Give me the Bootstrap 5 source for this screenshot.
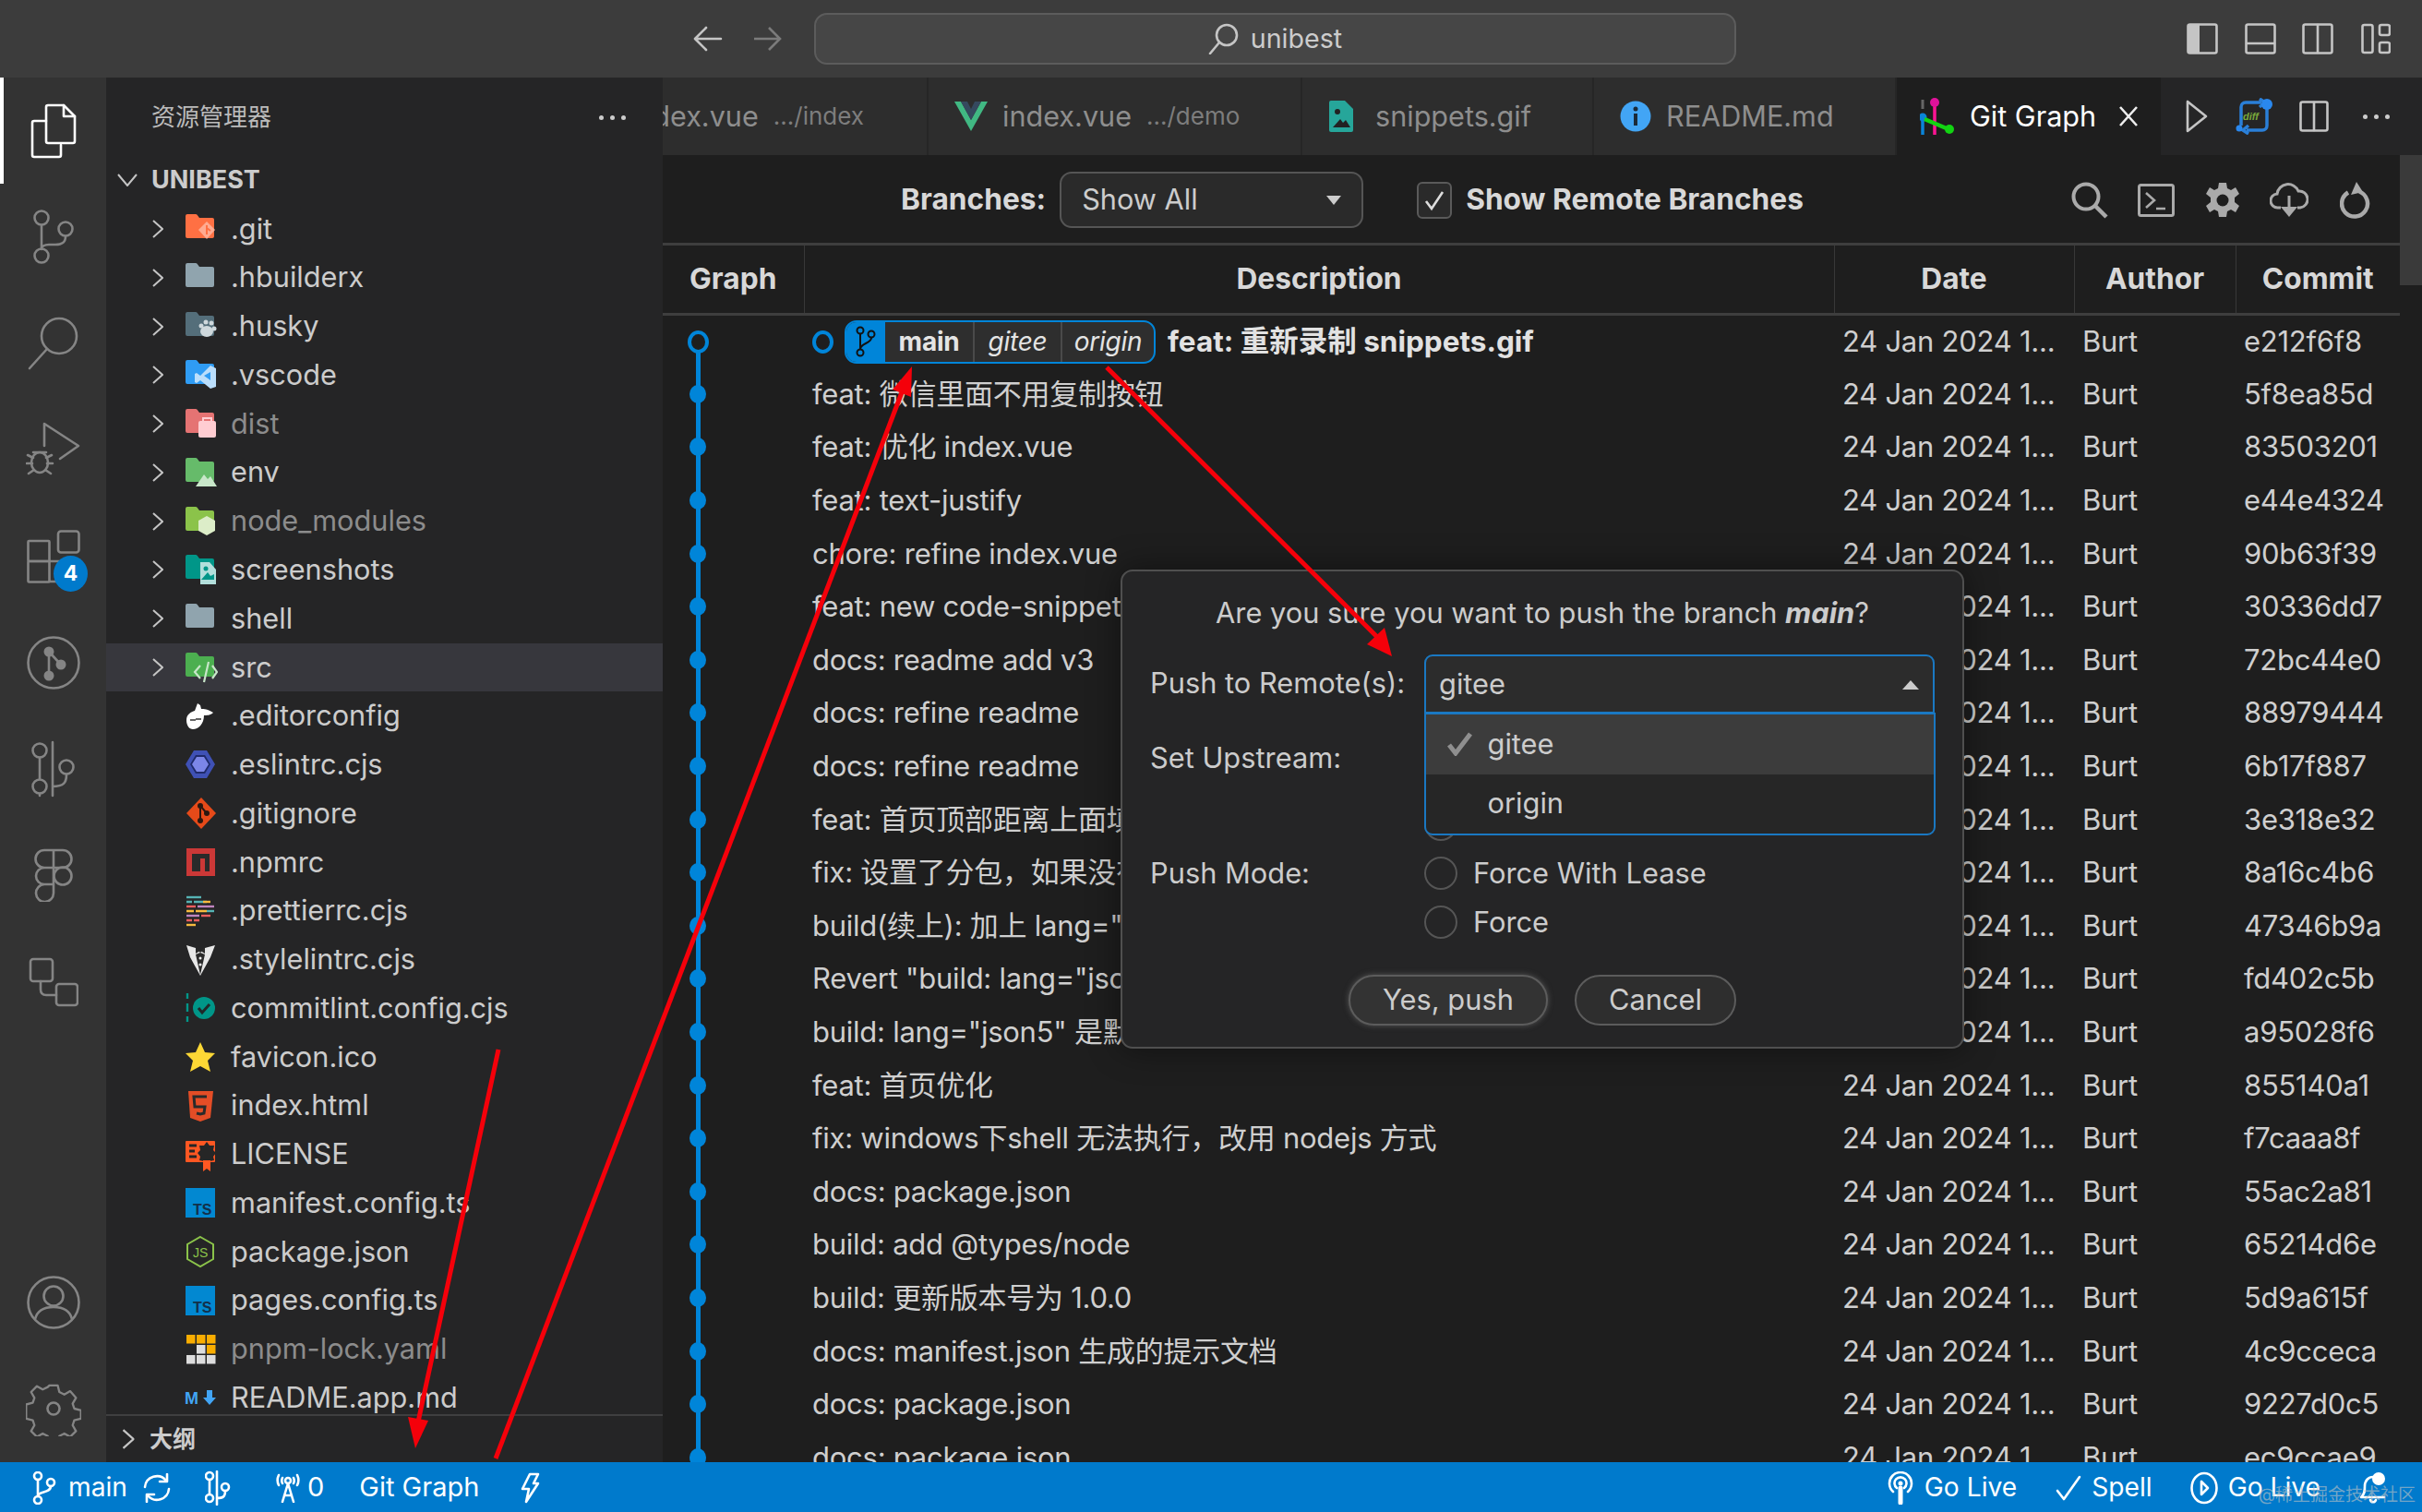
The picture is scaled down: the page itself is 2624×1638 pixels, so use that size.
<!DOCTYPE html>
<html lang="zh-CN">
<head>
<meta charset="utf-8">
<title>Git Graph - unibest</title>
<link href="https://cdn.jsdelivr.net/npm/bootstrap@5.3.0/dist/css/bootstrap.min.css" rel="stylesheet">
<style>
html,body{width:2624px;height:1638px;overflow:hidden;margin:0}
body{position:relative;background:#1e1e1e;color:#ccc;font-family:"Inter","Noto Sans CJK SC",sans-serif;font-size:30.7px;line-height:1.2}
svg{display:block;flex:none}
.ic-line{fill:none;stroke:#858585;stroke-width:2.6;stroke-linecap:round;stroke-linejoin:round}
.wline{fill:none;stroke:#fff;stroke-width:2.6;stroke-linecap:round;stroke-linejoin:round}
.gline{fill:none;stroke:#c5c5c5;stroke-width:2.6;stroke-linecap:round;stroke-linejoin:round}
.titlebar{height:84px;background:#3c3c3c;flex:none;padding-left:740px;padding-right:19px}
.navbtn{width:54px;height:56px}
.navbtn+.navbtn{margin-left:10px;margin-right:24px}
.searchbox{width:999px;height:56px;background:#464646;border:2px solid #5c5c5c;border-radius:14px;color:#ccc;font-size:28.6px;gap:13px}
.layoutbtn{width:62.6px}
.workbench{height:1500px;min-height:0}
.actbar{width:115px;background:#333;flex:none}
.actitem{height:115.25px;flex:none;position:relative}
.actitem.on{border-left:4px solid #fff}
.actbadge{position:absolute;left:58px;top:57px;width:37px;height:39px;border-radius:50%;background:#007acc;color:#fff;font-size:23px;font-weight:700}
.sidepane{width:603px;background:#252526;flex:none;min-height:0}
.sidehead{height:86px;flex:none;padding:0 40px 0 49px;font-size:26px;color:#bbb}
.dots3{gap:7px}
.dots3 i{width:5px;height:5px;background:#ccc;border-radius:50%;display:block}
.rootrow{height:50px;flex:none;font-weight:700;font-size:27px;color:#ccc;padding-left:12px;gap:15px}
.treebox{flex:1 1 auto;min-height:0;overflow:hidden;padding-top:1.7px}
.trow{height:52.78px;padding-left:50px;white-space:nowrap}
.trow.sel{background:#37373d}
.trow.leaf{padding-left:85px}
.trow .fico{width:36px;height:36px;margin-right:14px}
.trow .chev{margin-right:23px;width:12px}
.muted1{color:#8c8c8c}
.outline{height:52px;flex:none;border-top:2px solid #3f3f40;padding-left:17px;font-size:25px;font-weight:700;gap:16px}
.editor{flex:1 1 auto;min-width:0;min-height:0;background:#1e1e1e}
.tabstrip{height:84px;background:#252526;flex:none;overflow:hidden}
.vtab{flex:none;height:84px;background:#2d2d2d;color:#8e8e8e;font-size:30.6px;white-space:nowrap;overflow:hidden;border-right:2px solid #262626}
.vtab small{font-size:26px;color:#7d7d7d;margin-left:16px}
.vtab.cur{background:#1e1e1e;color:#fff;border:0}
.tabacts{flex:1 1 auto}
.gmain{flex:1 1 auto;min-height:0}
.gcontent{width:1882px;flex:none;min-height:0;overflow:hidden}
.gscroll{width:24px;flex:none}
.gthumb{height:141px;background:#3a3a3a}
.gtool{height:98px;flex:none;border-bottom:3px solid #3e3e3e;padding-left:258px;padding-right:12px;padding-top:2px;font-weight:700;font-size:31.7px;color:#d8d8d8}
.fakeselect{width:329px;height:61px;margin-left:15px;border:2px solid #555;border-radius:13px;background:#2a2a2a;padding:0 22px;font-weight:400;color:#ccc;font-size:30.7px}
.caretdn{width:0;height:0;border-left:8px solid transparent;border-right:8px solid transparent;border-top:10px solid #ccc}
.caretup{width:0;height:0;border-left:9px solid transparent;border-right:9px solid transparent;border-bottom:10px solid #ccc}
.fakecheck{width:38px;height:40px;border:2px solid #5a5a5a;border-radius:6px;background:#2a2a2a;margin-left:58px;margin-right:15px}
.toolico{width:72px}
.ggt.table{--bs-table-bg:transparent;--bs-table-color:#cfcfcf;--bs-table-border-color:#3e3e3e;margin:0;table-layout:fixed;width:1882px;border-collapse:collapse;font-size:31px;letter-spacing:-.25px}
.ggt.table>thead>tr>th{height:74.5px;padding:0 9px;border-bottom:3px solid #3e3e3e;border-right:1px solid #383838;text-align:center;vertical-align:middle;font-weight:700;font-size:31.7px;letter-spacing:0;color:#d8d8d8;box-shadow:none}
.ggt.table>thead>tr>th:last-child{border-right:0}
.ggt.table>tbody>tr>td{height:57.6px;padding:0 0 0 9px;border:0;vertical-align:middle;white-space:nowrap;overflow:hidden;box-shadow:none;line-height:1.1}
.ggt.table>tbody>tr>td.gcol{padding:0;background-image:linear-gradient(#0085d9,#0085d9);background-repeat:no-repeat;background-position:35.5px 0;background-size:5px 100%}
.ggt.table>tbody>tr>td.gcol.gfirst{background-position:35.5px 100%;background-size:5px 50%}
.gdot{display:block;width:18px;height:20px;margin-left:29px;border-radius:50%;background:#0085d9}
.gring{display:block;width:23px;height:25px;border:4px solid #0085d9;border-radius:50%;background:#1e1e1e;flex:none}
.gcol .gring{margin-left:26.5px}
.refpill{height:47px;margin:0 13px 0 12px;border:2px solid #0085d9;border-radius:13px;overflow:hidden;background:#2e2e2e;font-size:28px;color:#e4e4e4}
.refpill>span{height:100%;padding:0;justify-content:center}
.refbr{width:42px;background:#0085d9}
.refseg{border-left:2px solid #4a4a4a}
.commit-strong{font-weight:700;color:#e2e2e2;font-size:31.5px;letter-spacing:0}
.statusbar{height:54px;background:#007acc;color:#fff;flex:none;font-size:28.2px;padding-top:1px;white-space:nowrap}
.stitem{flex:none}
.stwide{font-size:29px}
.pushdlg{position:absolute;left:1214px;top:617px;width:914px;height:519px;background:#252526;border:2px solid #4f4f4f;border-radius:13px;box-shadow:0 0 36px rgba(0,0,0,.45);z-index:5;font-size:30.8px;color:#ccc}
.dlgtitle{height:90px}
.dlgrow{padding-left:30px}
.dlglabel{width:297px;flex:none}
.remotesel{width:553px;height:63.5px;border:2.5px solid #1a78c2;border-radius:9px 9px 0 0;background:#2c2c2c;padding:2px 15px 0 14px;position:relative}
.remotelist{position:absolute;left:-2.5px;right:-2.5px;top:61px;height:133px;background:#262626;border:2.5px solid #1a78c2;border-radius:0 0 9px 9px;overflow:hidden;z-index:2}
.remoteopt{height:64.5px;padding-left:67px;position:relative}
.remoteopt.hl{background:#3c3c3c}
.remoteopt svg{position:absolute;left:22px;top:19px}
.dlgradio{width:36px;height:36px;border-radius:50%;border:2px solid #555;margin-right:17px;flex:none}
.dlgbtns{margin-top:30px;gap:29px}
.vsbtn{height:55px;border:2px solid #5c5c5c;border-radius:28px;background:#2e2e2e;color:#ccc;font-size:30.8px;line-height:1;padding:0 35px;display:flex;align-items:center}
.vsbtn.pri{box-shadow:0 0 6px #555;background:#333}
.vsbtn:hover{background:#333;color:#ccc;border-color:#5c5c5c}
.marks{position:absolute;left:0;top:0;width:2624px;height:1638px;z-index:9;pointer-events:none}
.wmark{position:absolute;right:7px;bottom:6px;font-size:19px;color:rgba(195,195,195,.6);z-index:8}
</style>
</head>
<body class="d-flex flex-column">
<svg width="0" height="0" style="position:absolute">
<defs>
<symbol id="folder" viewBox="0 0 36 36"><path d="M3 2h9a2 2 0 0 1 1.600.800L16 6h14a2 2 0 0 1 2 2v18a2 2 0 0 1-2 2H3a2 2 0 0 1-2-2V4a2 2 0 0 1 2-2z"/></symbol>
<symbol id="chev" viewBox="0 0 12 20"><polyline points="1,1 11,10 1,19" fill="none" stroke="#c5c5c5" stroke-width="2"/></symbol>
</defs>
</svg>

<!-- title bar -->
<header class="titlebar d-flex align-items-center">
<span class="navbtn d-flex align-items-center justify-content-center"><svg width="32" height="28" viewBox="0 0 32 28"><path class="gline" d="M30 14H3M14 2 2 14l12 12"/></svg></span>
<span class="navbtn d-flex align-items-center justify-content-center"><svg width="32" height="28" viewBox="0 0 32 28"><path d="M2 14h27M18 2l12 12-12 12" fill="none" stroke="#7b7b7b" stroke-width="2.600"/></svg></span>
<div class="searchbox d-flex align-items-center justify-content-center"><svg width="33" height="34" viewBox="0 0 33 34"><circle cx="20" cy="13" r="11" class="gline" stroke-width="2"/><path class="gline" d="M12 21 2 33"/></svg><span>unibest</span></div>
<div class="ms-auto d-flex align-items-center">
<span class="layoutbtn d-flex justify-content-center"><svg width="34" height="34" viewBox="0 0 34 34"><rect x="1.500" y="1.500" width="31" height="31" rx="2" class="gline"/><path d="M1 3a2 2 0 0 1 2-2h11v32H3a2 2 0 0 1-2-2z" fill="#c5c5c5"/></svg></span>
<span class="layoutbtn d-flex justify-content-center"><svg width="34" height="34" viewBox="0 0 34 34"><rect x="1.500" y="1.500" width="31" height="31" rx="2" class="gline"/><path class="gline" d="M2 22h30"/></svg></span>
<span class="layoutbtn d-flex justify-content-center"><svg width="34" height="34" viewBox="0 0 34 34"><rect x="1.500" y="1.500" width="31" height="31" rx="2" class="gline"/><path class="gline" d="M17 2v30"/></svg></span>
<span class="layoutbtn d-flex justify-content-center"><svg width="32" height="34" viewBox="0 0 32 34"><rect x="1.500" y="2" width="11" height="30" rx="2" class="gline"/><rect x="20" y="2" width="11" height="11" rx="2" class="gline"/><rect x="20" y="21" width="11" height="11" rx="2" class="gline"/></svg></span>
</div>
</header>

<div class="workbench d-flex flex-grow-1">
<!-- activity bar -->
<nav class="actbar d-flex flex-column">
<div class="actitem on d-flex align-items-center justify-content-center pe-1"><svg width="52" height="60" viewBox="0 0 52 60"><path class="wline" d="M34 45v11a2 2 0 0 1-2 2H5a2 2 0 0 1-2-2V21a2 2 0 0 1 2-2h13"/><path class="wline" d="M18 4a2 2 0 0 1 2-2h17l12 12v27a2 2 0 0 1-2 2H20a2 2 0 0 1-2-2z"/><path class="wline" d="M37 2v12h12"/></svg></div>
<div class="actitem d-flex align-items-center justify-content-center"><svg width="46" height="60" viewBox="0 0 46 60"><circle cx="10" cy="9" r="7.500" class="ic-line"/><circle cx="36" cy="21" r="7.500" class="ic-line"/><circle cx="10" cy="50" r="7.500" class="ic-line"/><path class="ic-line" d="M10 17v25M36 29c0 7-4 9-11 9H18c-5 0-8 2-8 5"/></svg></div>
<div class="actitem d-flex align-items-center justify-content-center"><svg width="56" height="58" viewBox="0 0 56 58"><circle cx="34" cy="21" r="19" class="ic-line"/><path class="ic-line" stroke-width="3" d="M21 35 2 56"/></svg></div>
<div class="actitem d-flex align-items-center justify-content-center"><svg width="60" height="60" viewBox="0 0 60 60"><path class="ic-line" d="M20 26V2l37 24-20 14"/><ellipse cx="15" cy="44" rx="9" ry="11" class="ic-line"/><path class="ic-line" d="M8 33l14 0M2 36l6 3M28 36l-6 3M1 45h6M23 45h6M3 56l6-4M27 56l-6-4"/></svg></div>
<div class="actitem d-flex align-items-center justify-content-center"><svg width="58" height="58" viewBox="0 0 58 58"><rect x="34" y="1.500" width="22.500" height="23" rx="3" class="ic-line"/><rect x="1.500" y="12" width="23" height="22" rx="1" class="ic-line"/><rect x="1.500" y="34" width="23" height="22.500" rx="1" class="ic-line"/><path class="ic-line" d="M24.500 34H47v22H24.500"/></svg><span class="actbadge d-flex align-items-center justify-content-center">4</span></div>
<div class="actitem d-flex align-items-center justify-content-center"><svg width="58" height="58" viewBox="0 0 58 58"><circle cx="29" cy="29" r="27.500" class="ic-line"/><circle cx="24" cy="17" r="5.500" fill="#858585"/><circle cx="37" cy="31" r="5.500" fill="#858585"/><circle cx="24" cy="43" r="5.500" fill="#858585"/><path class="ic-line" d="M24 18v25M25 18l11 12"/></svg></div>
<div class="actitem d-flex align-items-center justify-content-center"><svg width="48" height="62" viewBox="0 0 48 62"><circle cx="9" cy="11" r="7.500" class="ic-line"/><circle cx="38" cy="29" r="7.500" class="ic-line"/><circle cx="9" cy="50" r="7.500" class="ic-line"/><path class="ic-line" d="M9 19v23M23 2v58M38 37c0 9-3 13-15 13M9 58v2"/></svg></div>
<div class="actitem d-flex align-items-center justify-content-center"><svg width="42" height="58" viewBox="0 0 42 58"><path class="ic-line" d="M21 2H11a9.500 9.500 0 0 0 0 19h10zM21 2h10a9.500 9.500 0 0 1 0 19H21zM21 21H11a9 9 0 0 0 0 18h10zM21 39H11a9.500 9.500 0 1 0 10 9.500z"/><circle cx="31" cy="30" r="9.500" class="ic-line"/></svg></div>
<div class="actitem d-flex align-items-center justify-content-center"><svg width="54" height="54" viewBox="0 0 54 54"><rect x="2" y="2" width="24" height="24" rx="3" class="ic-line"/><rect x="30" y="29" width="23" height="23" rx="3" class="ic-line"/><path class="ic-line" d="M13 26v9c0 4 2 6 6 6h11"/></svg></div>
<div class="mt-auto">
<div class="actitem d-flex align-items-center justify-content-center"><svg width="58" height="60" viewBox="0 0 58 60"><circle cx="29" cy="30" r="27.500" class="ic-line" stroke-width="3"/><circle cx="29" cy="23" r="10.500" class="ic-line"/><path class="ic-line" d="M9 48c2-8 9-13 20-13s18 5 20 13"/></svg></div>
<div class="actitem d-flex align-items-center justify-content-center"><svg width="60" height="60" viewBox="0 0 60 60"><path class="ic-line" stroke-width="3" d="M25 2h10l2 8 6 3 7-4 7 8-4 7 2 6 8 2v10l-8 2-2 6 4 7-7 7-7-4-6 3-2 8H25l-2-8-6-3-7 4-7-7 4-7-2-6-8-2V25l8-2 2-6-4-7 7-7 7 4 6-3z" transform="translate(3 3) scale(.9)"/><circle cx="30" cy="30" r="6.500" class="ic-line"/></svg></div>
</div>
</nav>

<!-- explorer -->
<aside class="sidepane d-flex flex-column">
<div class="sidehead d-flex align-items-center justify-content-between"><span>资源管理器</span><span class="dots3 d-flex"><i></i><i></i><i></i></span></div>
<div class="rootrow d-flex align-items-center"><svg width="22" height="14" viewBox="0 0 22 14"><polyline points="1,1 11,13 21,1" fill="none" stroke="#c5c5c5" stroke-width="2"/></svg><span>UNIBEST</span></div>
<div class="treebox">
<div class="trow d-flex align-items-center"><svg class="chev" height="20"><use href="#chev"/></svg><svg class="fico" viewBox="0 0 36 36"><use href="#folder" fill="#ff7043"/><path d="M24 10l9 9-9 10-9-10z" fill="#ffab91"/><path d="M24 14v10M24 17l4 3" stroke="#ff7043" stroke-width="2" fill="none"/></svg><span>.git</span></div>
<div class="trow d-flex align-items-center"><svg class="chev" height="20"><use href="#chev"/></svg><svg class="fico" viewBox="0 0 36 36"><use href="#folder" fill="#90a4ae"/></svg><span>.hbuilderx</span></div>
<div class="trow d-flex align-items-center"><svg class="chev" height="20"><use href="#chev"/></svg><svg class="fico" viewBox="0 0 36 36"><use href="#folder" fill="#546e7a"/><g fill="#cfd8dc"><ellipse cx="24" cy="23" rx="7" ry="6"/><circle cx="18" cy="17" r="2.500"/><circle cx="23" cy="13" r="2.500"/><circle cx="29" cy="14" r="2.500"/><circle cx="32" cy="20" r="2.500"/></g></svg><span>.husky</span></div>
<div class="trow d-flex align-items-center"><svg class="chev" height="20"><use href="#chev"/></svg><svg class="fico" viewBox="0 0 36 36"><use href="#folder" fill="#2f9cf4"/><path d="M28 8l6 3v20l-6 2-11-9-4 3-2-1v-9l2-1 4 3zM28 15l-7 4 7 5z" fill="#bbdefb"/></svg><span>.vscode</span></div>
<div class="trow d-flex align-items-center"><svg class="chev" height="20"><use href="#chev"/></svg><svg class="fico" viewBox="0 0 36 36"><use href="#folder" fill="#e57373"/><rect x="15" y="15" width="19" height="18" rx="2" fill="#ffcdd2"/><path d="M20 15v-3h9v3" stroke="#ffcdd2" stroke-width="2" fill="none"/></svg><span class="muted1">dist</span></div>
<div class="trow d-flex align-items-center"><svg class="chev" height="20"><use href="#chev"/></svg><svg class="fico" viewBox="0 0 36 36"><use href="#folder" fill="#66bb6a"/><path d="M12 33l9-13 4 5 3-3 7 11z" fill="#c8e6c9"/></svg><span>env</span></div>
<div class="trow d-flex align-items-center"><svg class="chev" height="20"><use href="#chev"/></svg><svg class="fico" viewBox="0 0 36 36"><use href="#folder" fill="#8bc34a"/><path d="M24 12l9 5v11l-9 5-9-5V17z" fill="#dcedc8"/></svg><span class="muted1">node_modules</span></div>
<div class="trow d-flex align-items-center"><svg class="chev" height="20"><use href="#chev"/></svg><svg class="fico" viewBox="0 0 36 36"><use href="#folder" fill="#009688"/><path d="M17 10h10l7 8v16H17z" fill="#b2dfdb"/><circle cx="23" cy="17" r="2.500" fill="#009688"/><path d="M18 29l7-8 3 4 4-2v6z" fill="#009688"/></svg><span>screenshots</span></div>
<div class="trow d-flex align-items-center"><svg class="chev" height="20"><use href="#chev"/></svg><svg class="fico" viewBox="0 0 36 36"><use href="#folder" fill="#90a4ae"/></svg><span>shell</span></div>
<div class="trow sel d-flex align-items-center"><svg class="chev" height="20"><use href="#chev"/></svg><svg class="fico" viewBox="0 0 36 36"><use href="#folder" fill="#4caf50"/><path d="M17 16l-6 7 6 7M30 16l5 7-5 7M26 12l-5 22" fill="none" stroke="#c8e6c9" stroke-width="2.200"/></svg><span>src</span></div>

<div class="trow leaf d-flex align-items-center"><svg class="fico" viewBox="0 0 36 36"><path d="M2 22c0-6 5-9 9-10l3-8 3 2 1 4c3 0 7 0 13 4-3 3-7 3-10 3 0 9-6 15-12 15-4 0-7-4-7-10z" fill="#fff"/><path d="M6 22h6M12 21h6" stroke="#333" stroke-width="1.500"/></svg><span>.editorconfig</span></div>
<div class="trow leaf d-flex align-items-center"><svg class="fico" viewBox="0 0 36 36"><path d="M10 3h14l9 15-9 15H10L1 18z" fill="#3f51b5"/><path d="M12 8h10l6 10-6 10H12L6 18z" fill="#1f2a6b"/><path d="M13 10h8l5 8-5 8h-8l-5-8z" fill="#7c86e8"/></svg><span>.eslintrc.cjs</span></div>
<div class="trow leaf d-flex align-items-center"><svg class="fico" viewBox="0 0 36 36"><path d="M18 1l16 17-16 17L2 18z" fill="#e64a19"/><circle cx="17" cy="10" r="3" fill="#2b1810"/><circle cx="24" cy="18" r="3" fill="#2b1810"/><circle cx="17" cy="26" r="3" fill="#2b1810"/><path d="M17 10v16M17 10l7 8" stroke="#2b1810" stroke-width="2"/></svg><span>.gitignore</span></div>
<div class="trow leaf d-flex align-items-center"><svg class="fico" viewBox="0 0 36 36"><rect x="2" y="3" width="31" height="30" fill="#cb3837"/><path d="M8 9h19v19h-5V14h-5v14H8z" fill="#2a2a2a"/></svg><span>.npmrc</span></div>
<div class="trow leaf d-flex align-items-center"><svg class="fico" viewBox="0 0 36 36"><g stroke-width="2.400"><path d="M2 3h16" stroke="#56b3b4"/><path d="M2 8h6M10 8h14" stroke="#56b3b4"/><path d="M20 8h8" stroke="#f7ba3e"/><path d="M2 13h10" stroke="#ea5e5e"/><path d="M14 13h18" stroke="#bf85bf"/><path d="M2 18h8M12 18h12" stroke="#f7ba3e"/><path d="M24 18h8" stroke="#56b3b4"/><path d="M2 23h14" stroke="#bf85bf"/><path d="M18 23h10" stroke="#ea5e5e"/><path d="M2 28h6M10 28h6" stroke="#ea5e5e"/><path d="M2 33h10" stroke="#f7ba3e"/></g></svg><span>.prettierrc.cjs</span></div>
<div class="trow leaf d-flex align-items-center"><svg class="fico" viewBox="0 0 36 36"><path d="M2 2l10 3 5 5 5-5 11-3-5 13-11 20L6 15z" fill="#e8e8e8"/><path d="M12 12l5 22 5-22-5-2z" fill="#2a2a2a"/><path d="M12 4l5 4 5-4v7l-5-3-5 3z" fill="#2a2a2a"/><circle cx="17" cy="16" r="1.500" fill="#eee"/><circle cx="17" cy="23" r="1.500" fill="#eee"/></svg><span>.stylelintrc.cjs</span></div>
<div class="trow leaf d-flex align-items-center"><svg class="fico" viewBox="0 0 36 36"><path d="M3 2v6M3 13v9M3 27v6" stroke="#009688" stroke-width="2.400"/><circle cx="21" cy="18" r="12" fill="#009688"/><path d="M15 18l4 5 8-9" fill="none" stroke="#1f2a2a" stroke-width="3"/></svg><span>commitlint.config.cjs</span></div>
<div class="trow leaf d-flex align-items-center"><svg class="fico" viewBox="0 0 36 36"><path d="M17 2l5 11 11 1-8 8 3 12-11-6-11 6 3-12-8-8 11-1z" fill="#fdd835"/></svg><span>favicon.ico</span></div>
<div class="trow leaf d-flex align-items-center"><svg class="fico" viewBox="0 0 36 36"><path d="M4 2h27l-3 29-11 4-11-4z" fill="#e44d26"/><path d="M24 8H10l1 11h11l-1 7-4 1-4-1" fill="none" stroke="#2a2a2a" stroke-width="3"/></svg><span>index.html</span></div>
<div class="trow leaf d-flex align-items-center"><svg class="fico" viewBox="0 0 36 36"><rect x="1" y="3" width="32" height="23" rx="1" fill="#ff5722"/><path d="M5 8h8M5 14h6M5 20h8" stroke="#262626" stroke-width="3"/><path d="M24 4l3 4 5 0-1 5 3 3-3 4 1 4-5 1-3 3-3-3-5-1 1-4-3-4 3-3-1-5 5 0z" fill="#262626"/><path d="M20 24v12l4-3 4 3V24z" fill="#ff5722"/></svg><span>LICENSE</span></div>
<div class="trow leaf d-flex align-items-center"><svg class="fico" viewBox="0 0 36 36"><rect x="1" y="2" width="32" height="32" fill="#0288d1"/><text x="9" y="31" font-family="Liberation Sans,sans-serif" font-size="16" font-weight="700" fill="#12304a">TS</text></svg><span>manifest.config.ts</span></div>
<div class="trow leaf d-flex align-items-center"><svg class="fico" viewBox="0 0 36 36"><path d="M17 2l14 8v16l-14 8-14-8V10z" fill="none" stroke="#8bc34a" stroke-width="2"/><text x="9" y="24" font-family="Liberation Sans,sans-serif" font-size="14" fill="#8bc34a">JS</text></svg><span>package.json</span></div>
<div class="trow leaf d-flex align-items-center"><svg class="fico" viewBox="0 0 36 36"><rect x="1" y="2" width="32" height="32" fill="#0288d1"/><text x="9" y="31" font-family="Liberation Sans,sans-serif" font-size="16" font-weight="700" fill="#12304a">TS</text></svg><span>pages.config.ts</span></div>
<div class="trow leaf d-flex align-items-center"><svg class="fico" viewBox="0 0 36 36"><rect x="2" y="2" width="9.500" height="9.500" fill="#f9ad00"/><rect x="13" y="2" width="9.500" height="9.500" fill="#f9ad00"/><rect x="24" y="2" width="9.500" height="9.500" fill="#f9ad00"/><rect x="13" y="13" width="9.500" height="9.500" fill="#ddd"/><rect x="24" y="13" width="9.500" height="9.500" fill="#f9ad00"/><rect x="2" y="24" width="9.500" height="9.500" fill="#ddd"/><rect x="13" y="24" width="9.500" height="9.500" fill="#ddd"/><rect x="24" y="24" width="9.500" height="9.500" fill="#ddd"/></svg><span class="muted1">pnpm-lock.yaml</span></div>
<div class="trow leaf d-flex align-items-center"><svg class="fico" viewBox="0 0 36 36"><text x="0" y="25" font-family="Liberation Sans,sans-serif" font-size="18" font-weight="700" fill="#42a5f5">M</text><path d="M24 10h6v8h4l-7 8-7-8h4z" fill="#42a5f5"/></svg><span>README.app.md</span></div>
</div>
<div class="outline d-flex align-items-center"><svg width="14" height="22" viewBox="0 0 12 20"><use href="#chev"/></svg><span>大纲</span></div>
</aside>

<!-- editor -->
<main class="editor d-flex flex-column">
<div class="tabstrip d-flex position-relative">
<div class="vtab d-flex align-items-center justify-content-end" style="width:288px;padding-right:68px"><span>index.vue</span><small>.../index</small></div>
<div class="vtab d-flex align-items-center" style="width:405px;padding-left:28px"><svg width="36" height="34" viewBox="0 0 36 34" class="me-3"><path d="M0 1h7l11 20L29 1h7L18 33z" fill="#41b883"/><path d="M7 1h7l4 8 4-8h7L18 21z" fill="#35495e"/></svg><span>index.vue</span><small>.../demo</small></div>
<div class="vtab d-flex align-items-center" style="width:316px;padding-left:29px"><svg width="26" height="34" viewBox="0 0 26 34" class="me-4"><path d="M2 0h15l9 9v23a2 2 0 0 1-2 2H2a2 2 0 0 1-2-2V2a2 2 0 0 1 2-2z" fill="#26a69a"/><circle cx="9" cy="12" r="3" fill="#222"/><path d="M4 29l8-9 3 4 3-3 5 8z" fill="#222"/></svg><span>snippets.gif</span></div>
<div class="vtab d-flex align-items-center" style="width:328px;padding-left:28px"><svg width="34" height="34" viewBox="0 0 34 34" class="me-3"><circle cx="17" cy="17" r="16.500" fill="#42a5f5"/><rect x="15" y="14" width="4" height="13" fill="#1b2b3a"/><circle cx="17" cy="9" r="2.500" fill="#1b2b3a"/></svg><span>README.md</span></div>
<div class="vtab cur d-flex align-items-center" style="width:286px;padding-left:25px"><svg width="38" height="40" viewBox="0 0 38 40" class="me-3"><path d="M3 2v10M3 18v8" stroke="#666" stroke-width="3"/><path d="M3 24v16" stroke="#0a84d8" stroke-width="3.500"/><circle cx="3" cy="21" r="4.500" fill="#0a84d8"/><path d="M16 8v32" stroke="#ff1493" stroke-width="3.500"/><circle cx="16" cy="5" r="5" fill="#e0129a"/><path d="M5 23l26 11" stroke="#12d412" stroke-width="4.500"/><circle cx="32" cy="34" r="5" fill="#12d412"/></svg><span>Git Graph</span><svg width="22" height="24" viewBox="0 0 22 24" class="ms-auto me-4"><path d="M2 2l18 20M20 2 2 22" stroke="#eee" stroke-width="2.600"/></svg></div>
<div class="tabacts d-flex align-items-center">
<span class="d-flex justify-content-center" style="width:78px"><svg width="24" height="36" viewBox="0 0 24 36"><path class="gline" d="M2 2v32l20-16z"/></svg></span>
<span class="d-flex justify-content-center" style="width:46px"><svg width="40" height="40" viewBox="0 0 40 40"><path d="M6 30V10c0-3 2-5 5-5h17M26 1l6 4-6 5" fill="none" stroke="#2a7fd8" stroke-width="3.500"/><path d="M34 10v20c0 3-2 5-5 5H12M14 39l-6-4 6-5" fill="none" stroke="#2a7fd8" stroke-width="3.500"/><circle cx="34" cy="7" r="6" fill="#2a88ee"/><circle cx="4" cy="33" r="3.500" fill="#2a88ee"/><text x="8" y="24" font-family="Liberation Sans,sans-serif" font-size="11" font-style="italic" font-weight="700" fill="#79a83b">diff</text></svg></span>
<span class="d-flex justify-content-center" style="width:84px"><svg width="32" height="34" viewBox="0 0 32 34"><rect x="1.500" y="1.500" width="29" height="31" rx="2" class="gline"/><path class="gline" d="M16 2v30"/></svg></span>
<span class="dots3 d-flex" style="margin-left:11px"><i></i><i></i><i></i></span>
</div>
</div>

<div class="gmain d-flex">
<div class="gcontent d-flex flex-column">
<div class="gtool d-flex align-items-center">
<span>Branches:</span>
<div class="fakeselect d-flex align-items-center justify-content-between"><span>Show All</span><span class="caretdn"></span></div>
<span class="fakecheck d-flex align-items-center justify-content-center"><svg width="24" height="24" viewBox="0 0 24 24"><path d="M3 13l6 8L21 3" fill="none" stroke="#ddd" stroke-width="2.600"/></svg></span>
<span>Show Remote Branches</span>
<div class="ms-auto d-flex align-items-center">
<span class="toolico d-flex justify-content-center"><svg width="40" height="40" viewBox="0 0 40 40"><circle cx="16" cy="16" r="13.500" fill="none" stroke="#aaa" stroke-width="4"/><path d="M26 26l12 12" stroke="#aaa" stroke-width="4.500"/></svg></span>
<span class="toolico d-flex justify-content-center"><svg width="40" height="36" viewBox="0 0 40 36"><rect x="1.500" y="1.500" width="37" height="33" rx="2" fill="none" stroke="#aaa" stroke-width="3"/><path d="M9 10l9 8-9 8M20 27h10" fill="none" stroke="#aaa" stroke-width="2.600"/></svg></span>
<span class="toolico d-flex justify-content-center"><svg width="36" height="38" viewBox="0 0 36 38"><path d="M14 0h8l1 6 4 2 5-3 4 7-5 4v5l5 4-4 7-5-3-4 2-1 6h-8l-1-6-4-2-5 3-4-7 5-4v-5l-5-4 4-7 5 3 4-2z" fill="#aaa"/><circle cx="18" cy="19" r="6.500" fill="#1e1e1e"/></svg></span>
<span class="toolico d-flex justify-content-center"><svg width="42" height="38" viewBox="0 0 42 38"><path d="M12 27H9a7.500 7.500 0 0 1-1-15 12 12 0 0 1 23-3 9 9 0 0 1 2 18h-3" fill="none" stroke="#aaa" stroke-width="3"/><path d="M21 14v16" stroke="#aaa" stroke-width="3"/><path d="M12 26h18l-9 11z" fill="#aaa"/></svg></span>
<span class="toolico d-flex justify-content-center"><svg width="34" height="40" viewBox="0 0 34 40"><path d="M21 10.500A14 14 0 1 1 9 11.500" fill="none" stroke="#aaa" stroke-width="4.500"/><path d="M18 0l7 11-13 3z" fill="#aaa"/></svg></span>
</div>
</div>
<table class="table ggt">
<colgroup><col style="width:153px"><col style="width:1116px"><col style="width:260px"><col style="width:175px"><col style="width:178px"></colgroup>
<thead><tr><th>Graph</th><th>Description</th><th>Date</th><th>Author</th><th>Commit</th></tr></thead>
<tbody>
<tr><td class="gcol gfirst"><span class="gring"></span></td><td><div class="d-flex align-items-center"><span class="gring"></span><span class="refpill d-inline-flex align-items-center"><span class="refbr d-flex align-items-center"><svg width="22" height="34" viewBox="0 0 22 34"><circle cx="5" cy="5" r="3.500" fill="none" stroke="#111" stroke-width="2"/><circle cx="17" cy="9" r="3.500" fill="none" stroke="#111" stroke-width="2"/><circle cx="5" cy="29" r="3.500" fill="none" stroke="#111" stroke-width="2"/><path d="M5 9v16M17 13c0 6-12 6-12 12" fill="none" stroke="#111" stroke-width="2"/></svg></span><span class="d-flex align-items-center fw-bold" style="width:95px">main</span><span class="refseg fst-italic d-flex align-items-center" style="width:95px">gitee</span><span class="refseg fst-italic d-flex align-items-center" style="width:101px">origin</span></span><span class="commit-strong">feat: 重新录制 snippets.gif</span></div></td><td>24 Jan 2024 1...</td><td>Burt</td><td>e212f6f8</td></tr>
<tr><td class="gcol"><span class="gdot"></span></td><td>feat: 微信里面不用复制按钮</td><td>24 Jan 2024 1...</td><td>Burt</td><td>5f8ea85d</td></tr>
<tr><td class="gcol"><span class="gdot"></span></td><td>feat: 优化 index.vue</td><td>24 Jan 2024 1...</td><td>Burt</td><td>83503201</td></tr>
<tr><td class="gcol"><span class="gdot"></span></td><td>feat: text-justify</td><td>24 Jan 2024 1...</td><td>Burt</td><td>e44e4324</td></tr>
<tr><td class="gcol"><span class="gdot"></span></td><td>chore: refine index.vue</td><td>24 Jan 2024 1...</td><td>Burt</td><td>90b63f39</td></tr>
<tr><td class="gcol"><span class="gdot"></span></td><td>feat: new code-snippet</td><td>24 Jan 2024 1...</td><td>Burt</td><td>30336dd7</td></tr>
<tr><td class="gcol"><span class="gdot"></span></td><td>docs: readme add v3</td><td>24 Jan 2024 1...</td><td>Burt</td><td>72bc44e0</td></tr>
<tr><td class="gcol"><span class="gdot"></span></td><td>docs: refine readme</td><td>24 Jan 2024 1...</td><td>Burt</td><td>88979444</td></tr>
<tr><td class="gcol"><span class="gdot"></span></td><td>docs: refine readme</td><td>24 Jan 2024 1...</td><td>Burt</td><td>6b17f887</td></tr>
<tr><td class="gcol"><span class="gdot"></span></td><td>feat: 首页顶部距离上面填</td><td>24 Jan 2024 1...</td><td>Burt</td><td>3e318e32</td></tr>
<tr><td class="gcol"><span class="gdot"></span></td><td>fix: 设置了分包，如果没有</td><td>24 Jan 2024 1...</td><td>Burt</td><td>8a16c4b6</td></tr>
<tr><td class="gcol"><span class="gdot"></span></td><td>build(续上): 加上 lang="json5"</td><td>24 Jan 2024 1...</td><td>Burt</td><td>47346b9a</td></tr>
<tr><td class="gcol"><span class="gdot"></span></td><td>Revert "build: lang="json5"</td><td>24 Jan 2024 1...</td><td>Burt</td><td>fd402c5b</td></tr>
<tr><td class="gcol"><span class="gdot"></span></td><td>build: lang="json5" 是默认</td><td>24 Jan 2024 1...</td><td>Burt</td><td>a95028f6</td></tr>
<tr><td class="gcol"><span class="gdot"></span></td><td>feat: 首页优化</td><td>24 Jan 2024 1...</td><td>Burt</td><td>855140a1</td></tr>
<tr><td class="gcol"><span class="gdot"></span></td><td>fix: windows下shell 无法执行，改用 nodejs 方式</td><td>24 Jan 2024 1...</td><td>Burt</td><td>f7caaa8f</td></tr>
<tr><td class="gcol"><span class="gdot"></span></td><td>docs: package.json</td><td>24 Jan 2024 1...</td><td>Burt</td><td>55ac2a81</td></tr>
<tr><td class="gcol"><span class="gdot"></span></td><td>build: add @types/node</td><td>24 Jan 2024 1...</td><td>Burt</td><td>65214d6e</td></tr>
<tr><td class="gcol"><span class="gdot"></span></td><td>build: 更新版本号为 1.0.0</td><td>24 Jan 2024 1...</td><td>Burt</td><td>5d9a615f</td></tr>
<tr><td class="gcol"><span class="gdot"></span></td><td>docs: manifest.json 生成的提示文档</td><td>24 Jan 2024 1...</td><td>Burt</td><td>4c9cceca</td></tr>
<tr><td class="gcol"><span class="gdot"></span></td><td>docs: package.json</td><td>24 Jan 2024 1...</td><td>Burt</td><td>9227d0c5</td></tr>
<tr><td class="gcol"><span class="gdot"></span></td><td>docs: package.json</td><td>24 Jan 2024 1...</td><td>Burt</td><td>ec9ccae9</td></tr>
</tbody>
</table>
</div>
<div class="gscroll"><div class="gthumb"></div></div>
</div>
</main>
</div>

<!-- status bar -->
<footer class="statusbar d-flex align-items-center">
<svg width="26" height="36" viewBox="0 0 26 36" class="stitem" style="margin-left:35px"><circle cx="6" cy="5" r="4" class="wline"/><circle cx="20" cy="12" r="4" class="wline"/><circle cx="6" cy="31" r="4" class="wline"/><path class="wline" d="M6 9v18M20 16c0 8-14 5-14 11"/></svg>
<span class="stitem" style="margin-left:13px">main</span>
<svg width="34" height="32" viewBox="0 0 34 32" class="stitem" style="margin-left:15px"><path class="wline" d="M4 15A13 13 0 0 1 27 8M30 17A13 13 0 0 1 7 24"/><path class="wline" d="M28 1v8h-8M6 31v-8h8"/></svg>
<svg width="28" height="38" viewBox="0 0 28 38" class="stitem" style="margin-left:35px"><circle cx="5" cy="6" r="4" class="wline"/><circle cx="22" cy="18" r="4" class="wline"/><circle cx="5" cy="30" r="4" class="wline"/><path class="wline" d="M5 10v16M13 1v36M22 22c0 7-3 8-9 8"/></svg>
<svg width="30" height="32" viewBox="0 0 30 32" class="stitem" style="margin-left:47px"><circle cx="15" cy="8" r="3" class="wline"/><path class="wline" d="M9 31l6-20 6 20M11 24h8M5 13C3 9 3 6 5 2M25 13c2-4 2-7 0-11M9 11c-1-2-1-4 0-6M21 11c1-2 1-4 0-6"/></svg>
<span class="stitem stwide" style="margin-left:6px">0</span>
<span class="stitem stwide" style="margin-left:38px">Git Graph</span>
<svg width="22" height="34" viewBox="0 0 22 34" class="stitem" style="margin-left:44px"><path class="wline" d="M11 2h9l-5 10h5L7 32l3-14H3z"/></svg>
<div class="ms-auto d-flex align-items-center" style="padding-right:38px">
<svg width="28" height="36" viewBox="0 0 28 36" class="stitem"><path class="wline" d="M6 22a12 12 0 1 1 16 0M10 18a6.500 6.500 0 1 1 8 0"/><circle cx="14" cy="13" r="2.500" fill="#fff"/><path d="M14 18v16" stroke="#fff" stroke-width="5" stroke-linecap="round"/></svg>
<span class="stitem" style="margin-left:12px">Go Live</span>
<svg width="28" height="28" viewBox="0 0 28 28" class="stitem" style="margin-left:42px"><path class="wline" d="M2 17l7 9L26 2"/></svg>
<span class="stitem" style="margin-left:11px">Spell</span>
<svg width="30" height="36" viewBox="0 0 30 36" class="stitem" style="margin-left:41px"><ellipse cx="15" cy="18" rx="13.500" ry="16" class="wline"/><path class="wline" d="M12 11v14l7-7z"/></svg>
<span class="stitem" style="margin-left:11px">Go Live</span>
<svg width="30" height="36" viewBox="0 0 30 36" class="stitem" style="margin-left:42px"><path class="wline" d="M3 27c3-3 3-6 3-11 0-6 4-10 9-10"/><path class="wline" d="M2 28h25M12 31c1 3 5 3 6 0"/><circle cx="21" cy="8" r="7" fill="#fff"/></svg>
</div>
</footer>

<!-- push dialog -->
<section class="pushdlg d-flex flex-column">
<div class="dlgtitle d-flex align-items-center justify-content-center"><span>Are you sure you want to push the branch <b class="fst-italic">main</b>?</span></div>
<div class="dlgrow d-flex align-items-center"><span class="dlglabel">Push to Remote(s):</span>
<div class="remotesel d-flex align-items-center justify-content-between"><span>gitee</span><span class="caretup"></span>
<div class="remotelist"><div class="remoteopt hl d-flex align-items-center"><svg width="30" height="26" viewBox="0 0 30 26"><path d="M3 14l7 9L26 2" fill="none" stroke="#8f8f8f" stroke-width="5"/></svg><span>gitee</span></div><div class="remoteopt d-flex align-items-center"><span>origin</span></div></div></div></div>
<div class="dlgrow d-flex align-items-center pt-1" style="height:94px"><span class="dlglabel">Set Upstream:</span></div>
<div class="dlgrow d-flex align-items-center" style="height:53px"><span class="dlglabel"></span><span class="dlgradio"></span></div>
<div class="dlgrow d-flex align-items-center" style="height:53px"><span class="dlglabel">Push Mode:</span><span class="dlgradio"></span><span>Force With Lease</span></div>
<div class="dlgrow d-flex align-items-center" style="height:53px"><span class="dlglabel"></span><span class="dlgradio"></span><span>Force</span></div>
<div class="dlgbtns d-flex justify-content-center"><button type="button" class="btn vsbtn pri">Yes, push</button><button type="button" class="btn vsbtn">Cancel</button></div>
</section>

<span class="wmark">@稀土掘金技术社区</span>

<!-- red annotation arrows -->
<svg class="marks" viewBox="0 0 2624 1638">
<g fill="none" stroke="#f5000a" stroke-width="5">
<path d="M540 1137 452 1545"/>
<path d="M537 1580 979 420"/>
<path d="M1199 398 1492 690"/>
</g>
<g fill="#f5000a">
<path d="M450 1569 442 1535 464 1539z"/>
<path d="M988 397 987 430 967 422z"/>
<path d="M1508 711 1481 698 1500 680z"/>
</g>
</svg>
<script src="https://cdn.jsdelivr.net/npm/bootstrap@5.3.0/dist/js/bootstrap.bundle.min.js"></script>
</body>
</html>
